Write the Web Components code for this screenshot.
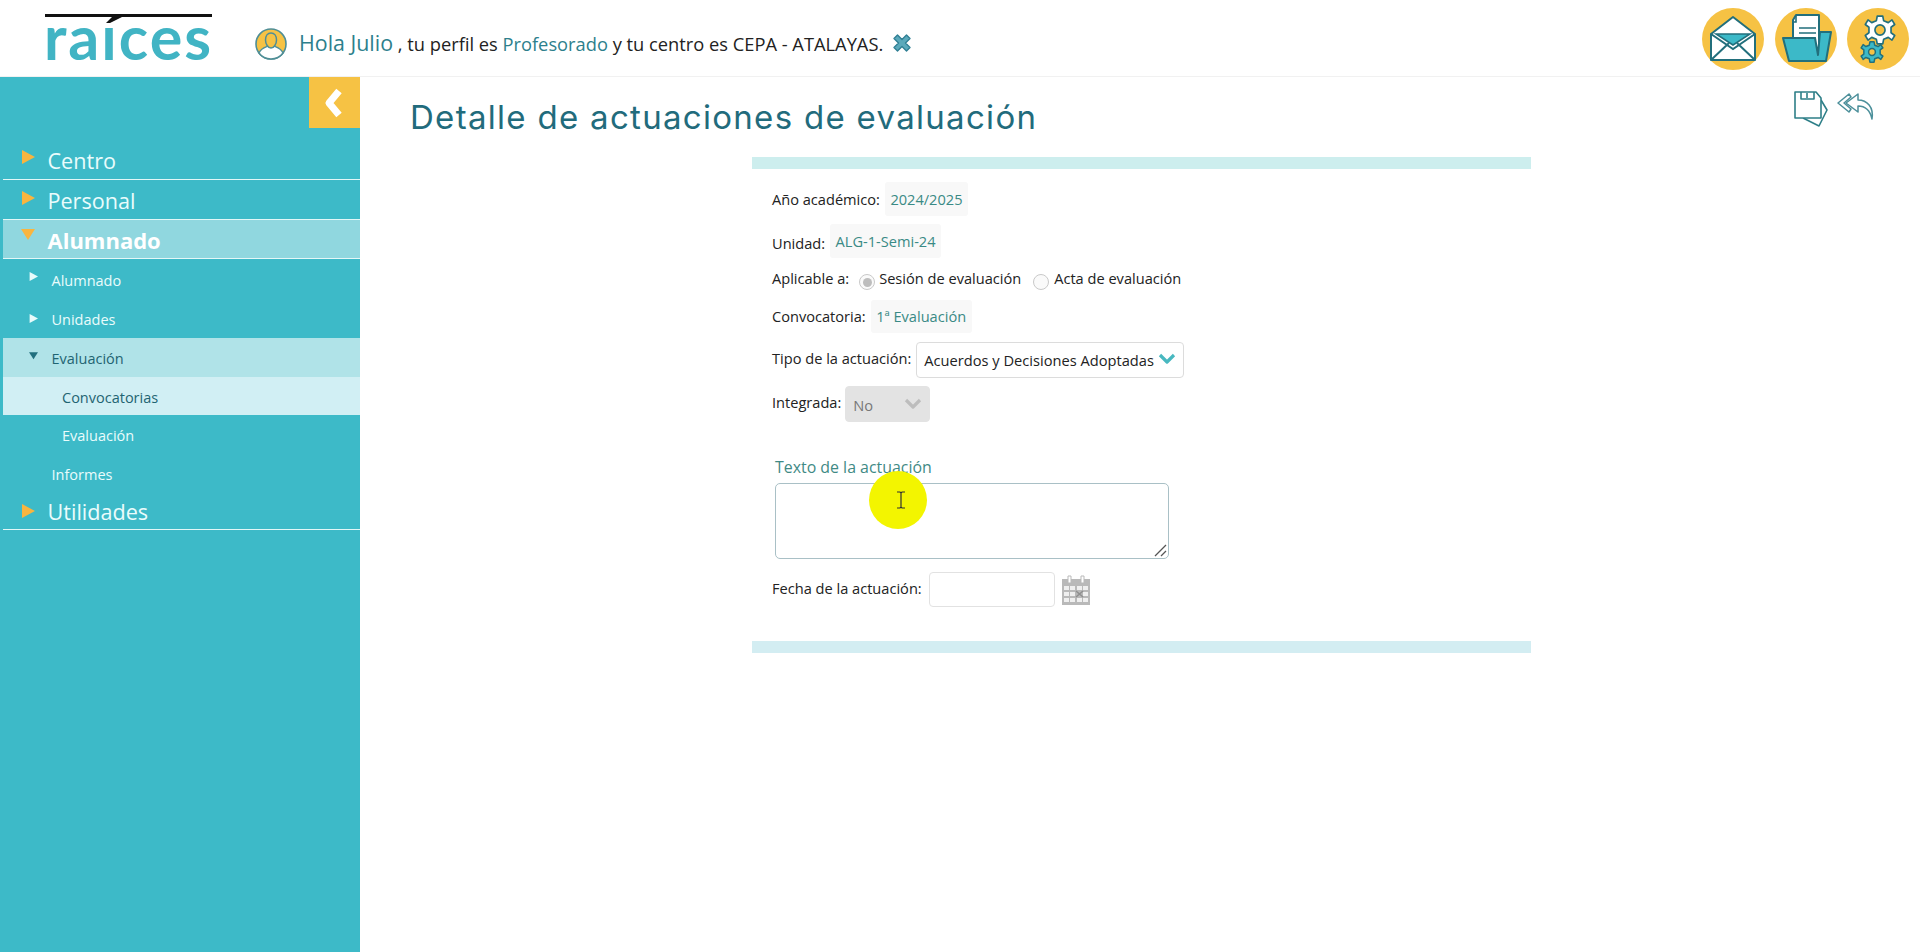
<!DOCTYPE html>
<html lang="es">
<head>
<meta charset="utf-8">
<title>Detalle de actuaciones de evaluación</title>
<style>
html,body{margin:0;padding:0;height:100%;background:#fff;font-family:"Open Sans","Noto Sans",sans-serif;overflow:hidden}
</style>
</head>
<body>
<raices-app></raices-app>
<script>
function def(name, html){
  customElements.define(name, class extends HTMLElement{
    connectedCallback(){
      if(this.shadowRoot) return;
      const r=this.attachShadow({mode:'open'});
      r.innerHTML=typeof html==='function'?html(this):html;
    }
  });
}
const cog="M-3-15H3L4-10 9-8 13-11 16-6 12-3V3L16 6 13 11 9 8 4 10 3 15H-3L-4 10-9 8-13 11-16 6-12 3V-3L-16-6-13-11-9-8-4-10z";
const ic={
mail:`<svg width="62" height="62" viewBox="0 0 62 62"><circle cx="31" cy="31" r="31" fill="#f6c244"/><path d="M9 26 31 9l22 17v26H9z" fill="#fff" stroke="#226f7c" stroke-width="2" stroke-linejoin="round"/><path d="M14 26h34L31 37z" fill="#3cb9c8" stroke="#226f7c" stroke-width="1.500"/><path d="M9 52 27 35M53 52 35 35M9 26l22 15 22-15" fill="none" stroke="#226f7c" stroke-width="2"/></svg>`,
folder:`<svg width="62" height="62" viewBox="0 0 62 62"><circle cx="31" cy="31" r="31" fill="#f6c244"/><path d="M21 7h23v38H18V12z" fill="#fff" stroke="#226f7c" stroke-width="2" stroke-linejoin="round"/><path d="M21 7v7h-3" fill="none" stroke="#226f7c" stroke-width="1.600"/><path d="M24 20h17M24 25h17M24 30h17" stroke="#226f7c" stroke-width="1.600"/><path d="M8 30h32l3 17 2-23h11l-5 29H14z" fill="#3cb9c8" stroke="#226f7c" stroke-width="2" stroke-linejoin="round"/></svg>`,
gear:`<svg width="62" height="62" viewBox="0 0 62 62"><circle cx="31" cy="31" r="31" fill="#f6c244"/><g transform="translate(33 22) scale(.92)"><path d="${cog}" fill="#fff" stroke="#226f7c" stroke-width="1.800" stroke-linejoin="round"/><circle r="5.500" fill="#f6c244" stroke="#226f7c" stroke-width="1.800"/></g><g transform="translate(25 44) scale(.68)"><path d="${cog}" fill="#3cb9c8" stroke="#226f7c" stroke-width="2.200" stroke-linejoin="round"/><circle r="5" fill="#f6c244" stroke="#226f7c" stroke-width="2.200"/></g></svg>`,
user:`<svg width="32" height="32" viewBox="0 0 32 32"><circle cx="16" cy="16" r="15" fill="#f6c244" stroke="#4f8e96" stroke-width="1.600"/><path d="M4 25c2-5 7-6 9-7h6c2 1 7 2 9 7a15 15 0 0 1-24 0z" fill="#fff" stroke="#4f8e96" stroke-width="1.400"/><path d="M10.500 12c0-4 2-7 5.500-7s5.500 3 5.500 7-2.500 8-5.500 8-5.500-4-5.500-8z" fill="#f6c244" stroke="#4f8e96" stroke-width="1.500"/></svg>`,
x:`<svg width="18" height="18" viewBox="0 0 18 18"><path d="M4.500 1 9 5.500 13.500 1 17 4.500 12.500 9 17 13.500 13.500 17 9 12.500 4.500 17 1 13.500 5.500 9 1 4.500z" fill="#5ba9bb" stroke="#2f7f94" stroke-width="1.400" stroke-linejoin="round"/></svg>`,
save:`<svg width="36" height="36" viewBox="0 0 36 36" fill="none" stroke="#2e7f88" stroke-width="1.600" stroke-linejoin="round"><path d="M28 9l6 10-8 16-16-8"/><path d="M2 1h21l5 6v20H2z" fill="#fff"/><path d="M8 1v7h13V1M14 2v5"/></svg>`,
reply:`<svg width="38" height="32" viewBox="0 0 38 32" fill="none" stroke="#4b8f9a" stroke-width="1.500" stroke-linejoin="round"><path d="M12 3 1 12l11 9 2-3-7-6 7-6z"/><path d="M21 3 9 12l12 9v-6c7 0 12 4 14 13 2-12-5-19-14-19z" fill="#fff"/></svg>`,
cal:`<svg width="30" height="30" viewBox="0 0 30 30"><path d="M1 4h28v26H1z" fill="#b9b9b9"/><path d="M7 1h3v7H7zM20 1h3v7h-3z" fill="#fff" stroke="#b9b9b9"/><g fill="#efefef"><rect x="3" y="11" width="5" height="4"/><rect x="9" y="11" width="5" height="4"/><rect x="16" y="11" width="5" height="4"/><rect x="22" y="11" width="5" height="4"/><rect x="3" y="17" width="5" height="4"/><rect x="9" y="17" width="5" height="4"/><rect x="22" y="17" width="5" height="4"/><rect x="3" y="23" width="5" height="4"/><rect x="9" y="23" width="5" height="4"/><rect x="16" y="23" width="5" height="4"/><rect x="22" y="23" width="5" height="4"/></g><path d="M15 16l7 6M22 16l-7 6" stroke="#8f8f8f" stroke-width="1.500"/></svg>`,
chev:c=>`<svg width="18" height="12" viewBox="0 0 18 12"><path d="M2 2l7 7 7-7" fill="none" stroke="${c}" stroke-width="3.200" stroke-linejoin="round"/></svg>`
};

def('raices-logo',`<style>
:host{display:block;width:168px;height:62px;position:relative;margin-left:44px}
.t{position:absolute;left:0;top:0;font:700 61px/60px Lato,sans-serif;color:#41b4c4;letter-spacing:2px;white-space:nowrap}
.bar{height:3px;background:#111;position:absolute;left:1px;right:0;top:7px}
.acc{position:absolute;left:60px;top:9px}
</style><span class="t" aria-label="raíces">raıces</span><div class="bar"></div><svg class="acc" width="20" height="8" viewBox="0 0 20 8"><path d="M2 7 8 1h10L6 7z" fill="#111"/></svg>`);

def('top-bar',()=>`<style>
:host{display:flex;align-items:center;height:76px;border-bottom:1px solid #f1f1f1;background:#fff;font-family:"Open Sans",sans-serif;color:#222;white-space:nowrap}
.who{display:flex;align-items:center;margin-left:43px;flex:1;font-size:18.300px;height:76px}
.who svg{display:block}
.av{margin-right:12px;margin-top:12px;height:32px}
.txt{margin-top:9px}
b{font-weight:400;color:#2d7f8c}
.hi{font-size:21.400px}
.x{margin-left:10px;margin-top:9px;height:18px}
.btns{display:flex;gap:10.500px;margin-right:11px;margin-top:2px}
.btns svg{display:block}
</style><raices-logo></raices-logo>
<div class="who"><span class="av">${ic.user}</span><span class="txt"><b class="hi">Hola Julio</b> , tu perfil es <b>Profesorado</b> y tu centro es CEPA - ATALAYAS.</span><span class="x">${ic.x}</span></div>
<div class="btns">${ic.mail}${ic.folder}${ic.gear}</div>`);

def('menu-item',h=>{
 const k=h.getAttribute('kind')||'top', state=h.getAttribute('state')||'', hh=h.getAttribute('h');
 const open=h.hasAttribute('open');
 const col=k==='top'?'#f9b53f':(state==='cur'?'#22707f':'#e9fbfb');
 const s=k==='top'?14:9;
 const arrow=h.hasAttribute('noarrow')?'':`<svg class="a" width="${s}" height="${s}" viewBox="0 0 14 14"><path d="${open?'M0 2h14L7 13z':'M1 0l13 7-13 7z'}" fill="${col}"/></svg>`;
 return `<style>
:host{display:flex;align-items:center;height:${hh}px;box-sizing:border-box;margin-left:3px;color:#eafcfc;white-space:nowrap;position:relative;font-family:"Open Sans",sans-serif}
:host([kind=top]){font-size:21.600px;border-bottom:1.500px solid #e3f7f7;padding:2px 0 0 44.500px}
:host([kind=sub]){font-size:14.500px;padding-left:48.500px}
:host([kind=leaf]){font-size:14.500px;padding-left:59px}
:host([state=open]){background:#90d7df;font-weight:700;color:#fff;font-size:22px;padding-top:1px}
:host([state=cur]){background:#b0e3e8;color:#1f6472;padding-top:2px}
:host([state=sel]){background:#d1eff4;color:#1f6472;padding-top:2px}
:host([last]){padding-top:0}
.a{position:absolute;left:${k==='top'?18:27}px;top:${k==='top'?(open?7:11):13}px}
:host([kind=sub]) .a{left:26px}
</style>${arrow}<span><slot></slot></span>`;
});

def('side-menu',`<style>
:host{display:block;width:360px;flex:none;background:#3dbac8;align-self:stretch}
.t{height:62px;display:flex;justify-content:flex-end}
.tg{width:51px;height:51px;background:#f6c244;display:flex;align-items:center;justify-content:center}
</style><div class="t"><div class="tg"><svg width="22" height="30" viewBox="0 0 22 30"><path d="M15 3 5 15l10 12" fill="none" stroke="#fff" stroke-width="7" stroke-linejoin="round"/></svg></div></div>
<slot></slot>`);

def('data-row',`<style>
:host{display:flex;align-items:center;font-size:14.600px;color:#222;white-space:nowrap;font-family:"Open Sans",sans-serif}
</style><slot></slot>`);
def('val-pill',`<style>
:host{display:inline-flex;align-items:center;padding:0 5.500px;margin-left:5px;background:#f8f8f8;color:#3a8a85;font-size:14.600px;border-radius:3px;align-self:stretch}
</style><slot></slot>`);
def('select-box',h=>`<style>
:host{display:inline-flex;align-items:center;justify-content:space-between;box-sizing:border-box;height:36px;border:1px solid #dcdcdc;border-radius:4px;background:#fff;color:#222;padding:0 7px 0 7px;font-size:14.650px;margin-left:5px}
:host([disabled]){background:#e3e3e3;border-color:#e3e3e3;color:#777;padding-top:2px;margin-left:4px}
svg{display:block;margin-top:-2px}
</style><span><slot></slot></span>${ic.chev(h.hasAttribute('disabled')?'#bdbdbd':'#48b8c0')}`);

def('text-area',`<style>
:host{display:block;box-sizing:border-box;width:394px;height:76px;margin-left:3px;border:1px solid #a9c0c6;border-radius:5px;background:#fff;position:relative}
svg{position:absolute;right:1px;bottom:1px}
</style><svg width="14" height="14" viewBox="0 0 14 14"><path d="M2 13 13 2M8 13l5-5" stroke="#555" stroke-width="1.300"/></svg>`);

def('radio-dot',`<style>
:host{display:inline-block;box-sizing:border-box;width:16px;height:16px;border:1px solid #c9c9c9;border-radius:50%;background:#fafafa;position:relative;top:3px}
:host([on])::after{content:"";position:absolute;inset:2.500px;border-radius:50%;background:#bdbdbd}
</style>`);

def('form-panel',`<style>
:host{display:flex;flex-direction:column;width:779px;margin-left:392px}
.bar{height:12px;background:#cdeeee}
.end{background:#d3edf2;margin-top:34px}
.rows{display:flex;flex-direction:column;padding-left:20px}
</style><div class="bar"></div><div class="rows"><slot></slot></div><div class="bar end"></div>`);

def('work-area',`<style>
:host{display:block;flex:1;position:relative;background:#fff;min-width:0}
.head{display:flex;justify-content:space-between;height:80px}
h1{margin:0;padding:15px 0 0 50px;font:400 33px/50px Inter,"Open Sans",sans-serif;letter-spacing:1.300px;color:#226b7c;white-space:nowrap}
.tools{display:flex;gap:8px;margin:14px 45px 0 0;align-items:flex-start}
.tools svg{display:block}
</style><div class="head"><h1>Detalle de actuaciones de evaluación</h1><div class="tools">${ic.save}${ic.reply}</div></div><slot></slot>`);

def('cursor-spot',`<style>
:host{position:absolute;left:869px;top:471px;width:58px;height:58px;border-radius:50%;background:#f3f500;display:flex;align-items:center;justify-content:center;pointer-events:none}
svg{margin-left:5px}
</style><svg width="10" height="18" viewBox="0 0 10 18"><path d="M1 1h3l1 1 1-1h3M5 2v14M1 17h3l1-1 1 1h3" fill="none" stroke="#333" stroke-width="1.200"/></svg>`);

def('raices-app',`<style>
:host{display:flex;flex-direction:column;height:952px;position:relative;overflow:hidden}
.body{display:flex;flex:1;min-height:0}
.r1{height:34px;margin-top:13px}
.r2{height:34px;margin-top:8px}
.r3{height:34px;margin-top:4px}
.r4{height:33px;margin-top:4px}
.r5{height:36px;margin-top:9px}
.r6{height:36px;margin-top:8px}
.lab{margin:34px 0 0 3px;height:22px;line-height:22px;font-size:15.900px;color:#3f8a85;font-family:"Open Sans",sans-serif;white-space:nowrap}
.ta{margin-top:5px;display:block}
.r7{height:35px;margin-top:13px}
.fi{display:block;box-sizing:border-box;width:126px;height:35px;border:1px solid #e2e2e2;border-radius:4px;margin-left:7px;background:#fff}
.ca{margin-left:6px;height:30px}
.ca svg{display:block}
.g0{margin-left:10px}
.g1{margin-left:4px}
.g2{margin-left:12px}
.g3{margin-left:5px}
.dn{position:relative;top:2px}
.up{position:relative;top:-2px}
.up1{position:relative;top:-1px}
.up2{position:relative;top:-2px}
.pu{padding-bottom:2px;box-sizing:border-box}
</style>
<top-bar></top-bar>
<div class="body">
<side-menu>
<menu-item kind="top" h="41">Centro</menu-item>
<menu-item kind="top" h="40">Personal</menu-item>
<menu-item kind="top" h="39" state="open" open>Alumnado</menu-item>
<menu-item kind="sub" h="42">Alumnado</menu-item>
<menu-item kind="sub" h="37">Unidades</menu-item>
<menu-item kind="sub" h="39" state="cur" open>Evaluación</menu-item>
<menu-item kind="leaf" h="38" state="sel" noarrow>Convocatorias</menu-item>
<menu-item kind="leaf" h="40" noarrow>Evaluación</menu-item>
<menu-item kind="sub" h="38" noarrow>Informes</menu-item>
<menu-item kind="top" h="37" last>Utilidades</menu-item>
</side-menu>
<work-area>
<form-panel>
<data-row class="r1"><span>Año académico:</span><val-pill>2024/2025</val-pill></data-row>
<data-row class="r2"><span class="dn">Unidad:</span><val-pill>ALG-1-Semi-24</val-pill></data-row>
<data-row class="r3"><span class="up1">Aplicable a:</span><radio-dot class="g0" on></radio-dot><span class="g1 up1">Sesión de evaluación</span><radio-dot class="g2"></radio-dot><span class="g3 up1">Acta de evaluación</span></data-row>
<data-row class="r4"><span class="up1">Convocatoria:</span><val-pill class="pu">1ª Evaluación</val-pill></data-row>
<data-row class="r5"><span class="up">Tipo de la actuación:</span><select-box style="width:268px">Acuerdos y Decisiones Adoptadas</select-box></data-row>
<data-row class="r6"><span class="up">Integrada:</span><select-box disabled style="width:85px">No</select-box></data-row>
<div class="lab">Texto de la actuación</div>
<text-area class="ta"></text-area>
<data-row class="r7"><span class="up2">Fecha de la actuación:</span><span class="fi"></span><span class="ca">${ic.cal}</span></data-row>
</form-panel>
</work-area>
</div>
<cursor-spot></cursor-spot>`);
</script>
</body>
</html>
